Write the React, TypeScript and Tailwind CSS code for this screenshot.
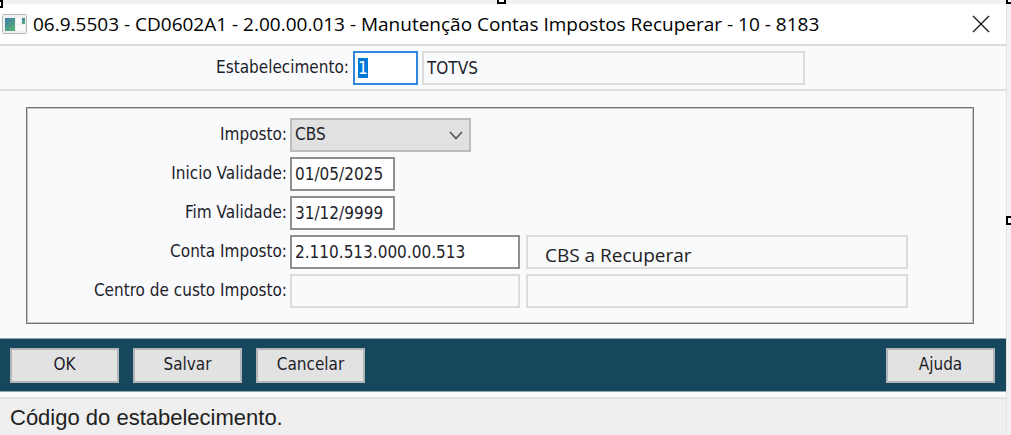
import { ReactNode, useEffect, useRef } from "react";

const labelFont = "font-['DejaVu_Sans_Condensed','Noto_Sans',sans-serif] text-[17px] text-[#1e1e2a]";
const fieldBase = "h-[34px] min-w-0 border-2 px-[3px] font-['DejaVu_Sans_Condensed','Noto_Sans',sans-serif] text-[17px] text-[#1e1e2a] outline-none";
const editable = "border-[#8f8f8f] bg-white";
const disabled = "border-[#dcdcdc] bg-[#f9fafc]";

export default function App() {
  const codeRef = useRef<HTMLInputElement>(null);

  useEffect(() => {
    codeRef.current?.focus();
    codeRef.current?.select();
  }, []);

  return (
    <div className="relative overflow-hidden bg-[#f1f1f1] pt-1 pr-1">
      <Handle className="-left-1.5 top-0 h-2" />
      <Handle className="left-[497px] -top-1 h-2" />
      <Handle className="-right-1 -top-1 h-2" />
      <Handle className="-right-1 top-[216px] h-[9px]" />

      <main className="border-r border-[#e4e4e4] bg-[#f9fafc]">
        <header className="flex h-[42px] items-center border-b-2 border-[#dcdcdc] bg-white pr-4 pl-0.5">
          <WindowIcon />
          <h1 className="ml-1.5 flex-1 truncate font-['Open_Sans',sans-serif] text-[19px] leading-7 text-black">
            06.9.5503 - CD0602A1 - 2.00.00.013 - Manutenção Contas Impostos Recuperar - 10 - 8183
          </h1>
          <button type="button" aria-label="Fechar" className="grid h-6 w-[18px] place-items-center">
            <svg viewBox="0 0 18 18" className="h-[18px] w-[18px]" fill="none" stroke="#111" strokeWidth="1.2">
              <path d="M1 1 17 17M17 1 1 17" />
            </svg>
          </button>
        </header>

        <section className="flex h-[45px] items-center gap-1 border-b-2 border-[#dfe0e2]">
          <label htmlFor="estabelecimento" className={`w-[349px] text-right ${labelFont}`}>
            Estabelecimento:
          </label>
          <input
            id="estabelecimento"
            ref={codeRef}
            defaultValue="1"
            className={`${fieldBase} w-[65px] border-[#2f86dc] bg-white selection:bg-[#0078d7] selection:text-white`}
          />
          <input
            aria-label="Nome do estabelecimento"
            readOnly
            value="TOTVS"
            className={`${fieldBase} ${disabled} w-[383px]`}
          />
        </section>

        <div className="px-[26px] pt-4 pr-[32px] pb-[14px]">
          <fieldset className="flex flex-col gap-[5px] border border-[#747577] pt-[10px] pb-[15px] ring-1 ring-[#c4c5c7] ring-inset">
            <Row id="imposto" label="Imposto:">
              <div className="relative">
                <select
                  id="imposto"
                  className={`${fieldBase} w-[181px] appearance-none border-[#bcbcbc] bg-[#e1e1e1]`}
                >
                  <option>CBS</option>
                </select>
                <svg
                  viewBox="0 0 14 9"
                  className="pointer-events-none absolute top-[13px] right-[8px] h-[9px] w-[14px]"
                  fill="none"
                  stroke="#5a5a5a"
                  strokeWidth="1.8"
                >
                  <path d="M1 1 7 7.5 13 1" />
                </svg>
              </div>
            </Row>
            <Row id="inicio" label="Inicio Validade:">
              <input id="inicio" defaultValue="01/05/2025" className={`${fieldBase} ${editable} w-[105px]`} />
            </Row>
            <Row id="fim" label="Fim Validade:">
              <input id="fim" defaultValue="31/12/9999" className={`${fieldBase} ${editable} w-[105px]`} />
            </Row>
            <Row id="conta" label="Conta Imposto:">
              <input id="conta" defaultValue="2.110.513.000.00.513" className={`${fieldBase} ${editable} w-[230px]`} />
              <input
                aria-label="Descrição da conta"
                readOnly
                value="CBS a Recuperar"
                className="h-[34px] w-[382px] min-w-0 border-2 border-[#dcdcdc] bg-[#f9fafc] pt-1.5 pl-[17px] font-['Open_Sans',sans-serif] text-[19px] text-[#222] outline-none"
              />
            </Row>
            <Row id="centro" label="Centro de custo Imposto:">
              <input id="centro" readOnly className={`${fieldBase} ${disabled} w-[230px]`} />
              <input aria-label="Descrição do centro de custo" readOnly className={`${fieldBase} ${disabled} w-[382px]`} />
            </Row>
          </fieldset>
        </div>

        <div className="flex h-[54px] items-center gap-[14px] border-t border-b border-[#8fa3ad] bg-[#17475c] pr-[11px] pl-[10px]">
          <DialogButton>OK</DialogButton>
          <DialogButton>Salvar</DialogButton>
          <DialogButton>Cancelar</DialogButton>
          <div className="ml-auto flex">
            <DialogButton>Ajuda</DialogButton>
          </div>
        </div>

        <footer className="mt-[5px] flex h-[39px] items-center border-t-2 border-[#e2e2e2] bg-[#efefef] pl-[10px] font-['Liberation_Sans',sans-serif] text-[22px] text-[#222]">
          Código do estabelecimento.
        </footer>
      </main>
    </div>
  );
}

function Row({ id, label, children }: { id: string; label: string; children: ReactNode }) {
  return (
    <div className="flex items-center gap-1.5">
      <label htmlFor={id} className={`-mr-[3px] w-[260px] shrink-0 text-right ${labelFont}`}>
        {label}
      </label>
      {children}
    </div>
  );
}

function DialogButton({ children }: { children: ReactNode }) {
  return (
    <button
      type="button"
      className={`h-[35px] w-[109px] border-2 border-[#b3b6b8] bg-[#e2e2e2] ${labelFont}`}
    >
      {children}
    </button>
  );
}

// resize grips around the window edge
function Handle({ className }: { className: string }) {
  return <span className={`absolute z-10 w-[9px] border-2 border-black bg-white ${className}`} />;
}

function WindowIcon() {
  return (
    <svg viewBox="0 0 25 20" className="h-5 w-[25px] shrink-0">
      <defs>
        <linearGradient id="pane" x1="0" y1="0" x2="0.6" y2="1">
          <stop offset="0" stopColor="#3f78a8" />
          <stop offset="1" stopColor="#55ad78" />
        </linearGradient>
      </defs>
      <rect x="0.5" y="0.5" width="24" height="19" rx="1" fill="#eef0f2" stroke="#b4b8bd" />
      <rect x="3" y="4" width="10" height="13" fill="url(#pane)" />
      <rect x="14" y="4" width="5" height="6" fill="#fafafa" />
      <rect x="14" y="11" width="9" height="6" fill="#fafafa" />
      <rect x="20" y="4" width="3" height="6" fill="url(#pane)" />
    </svg>
  );
}
